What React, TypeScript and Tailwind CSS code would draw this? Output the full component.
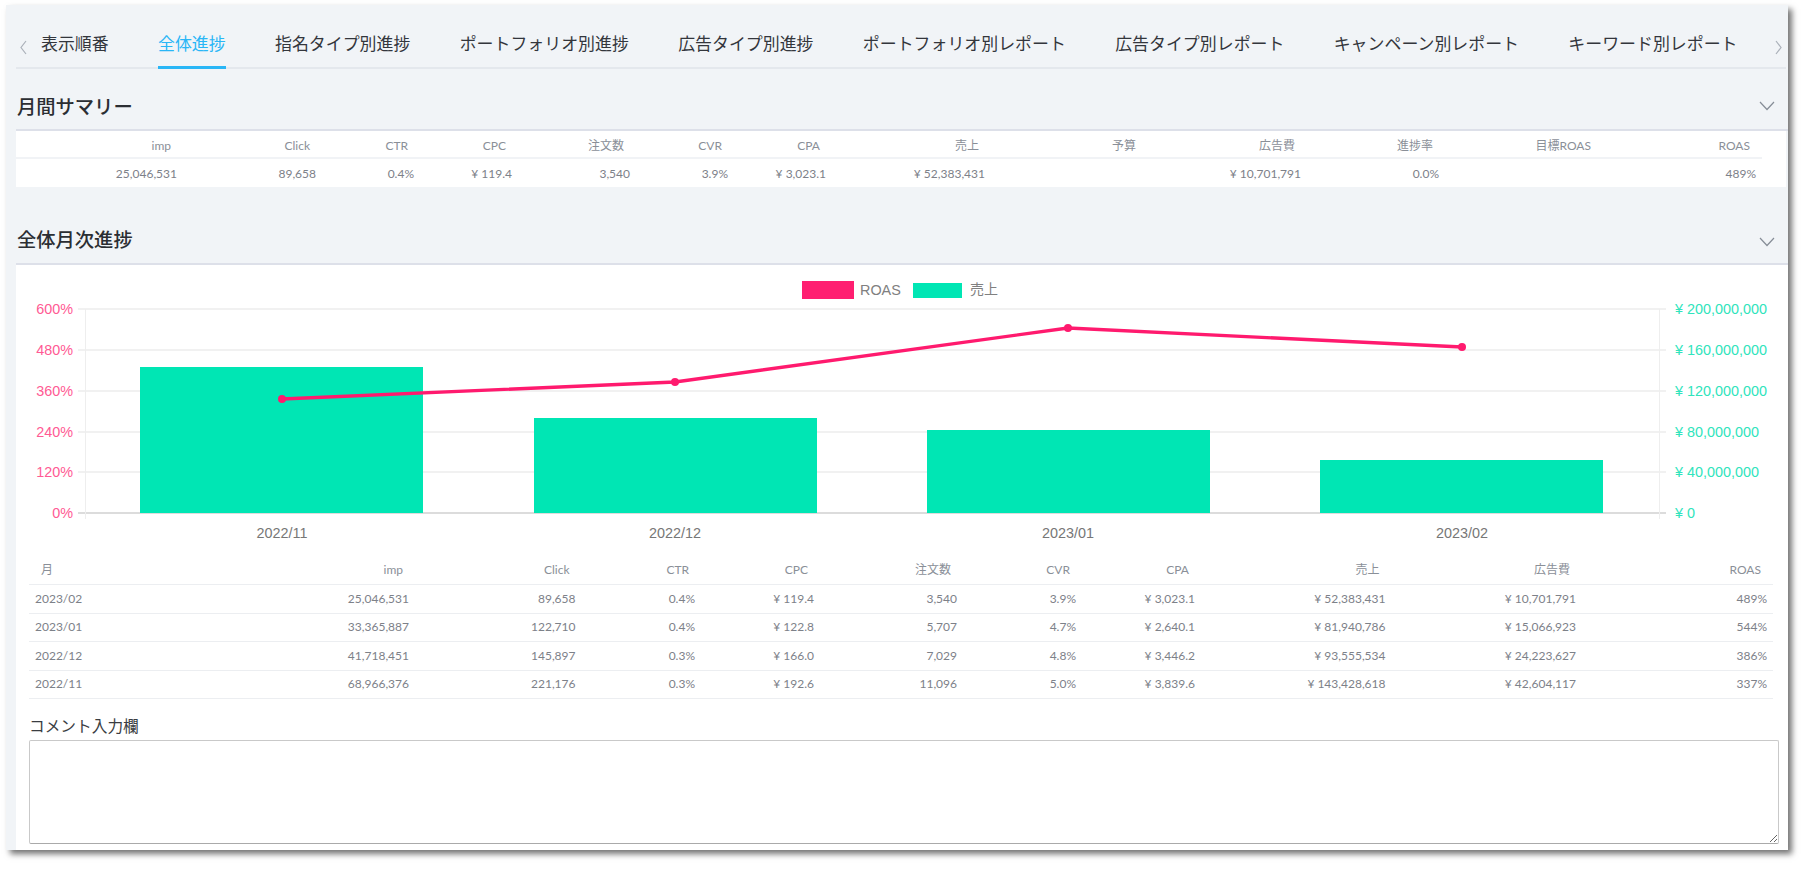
import React from "react";

const font = { fontFamily: '"Lato", "Noto Sans CJK JP", sans-serif' };
const cjk = { fontFamily: '"Noto Sans CJK JP", "Lato", sans-serif' };
const tabs = ["表示順番", "全体進捗", "指名タイプ別進捗", "ポートフォリオ別進捗", "広告タイプ別進捗", "ポートフォリオ別レポート", "広告タイプ別レポート", "キャンペーン別レポート", "キーワード別レポート"];
const summaryHead = ["imp", "Click", "CTR", "CPC", "注文数", "CVR", "CPA", "売上", "予算", "広告費", "進捗率", "目標ROAS", "ROAS"];
const summaryRow = ["25,046,531", "89,658", "0.4%", "¥ 119.4", "3,540", "3.9%", "¥ 3,023.1", "¥ 52,383,431", "", "¥ 10,701,791", "0.0%", "", "489%"];
const monthHead = ["imp", "Click", "CTR", "CPC", "注文数", "CVR", "CPA", "売上", "広告費", "ROAS"];
const monthRows = [
  ["2023/02", "25,046,531", "89,658", "0.4%", "¥ 119.4", "3,540", "3.9%", "¥ 3,023.1", "¥ 52,383,431", "¥ 10,701,791", "489%"],
  ["2023/01", "33,365,887", "122,710", "0.4%", "¥ 122.8", "5,707", "4.7%", "¥ 2,640.1", "¥ 81,940,786", "¥ 15,066,923", "544%"],
  ["2022/12", "41,718,451", "145,897", "0.3%", "¥ 166.0", "7,029", "4.8%", "¥ 3,446.2", "¥ 93,555,534", "¥ 24,223,627", "386%"],
  ["2022/11", "68,966,376", "221,176", "0.3%", "¥ 192.6", "11,096", "5.0%", "¥ 3,839.6", "¥ 143,428,618", "¥ 42,604,117", "337%"],
];

function Chevron({ d, color = "#aab0b9" }: { d: string; color?: string }) {
  return (
    <svg width="16" height="16" viewBox="0 0 16 16" fill="none" stroke={color} strokeWidth="1.2">
      <path d={d} />
    </svg>
  );
}

function SectionTitle({ title, className, chevronClass }: { title: string; className: string; chevronClass: string }) {
  return (
    <div className={`flex items-end justify-between border-b-2 border-[#dde0e9] pl-[1px] pr-[13px] ${className}`}>
      <span className="text-[19.3px] font-medium leading-[28px] text-[#2b2e33]" style={cjk}>{title}</span>
      <span className={chevronClass}><Chevron d="M1 4 L8 11.5 L15 4" color="#868d97" /></span>
    </div>
  );
}

function Chart() {
  const gridY = [309, 350, 391, 432, 472];
  const left = ["600%", "480%", "360%", "240%", "120%", "0%"];
  const right = ["¥ 200,000,000", "¥ 160,000,000", "¥ 120,000,000", "¥ 80,000,000", "¥ 40,000,000", "¥ 0"];
  const ys = [309, 350, 391, 432, 472, 513];
  const bars = [[140, 367], [534, 418], [927, 430], [1320, 460]];
  const pts = [[282, 399], [675, 382], [1068, 328], [1462, 347]];
  const labels = [[282, "2022/11"], [675, "2022/12"], [1068, "2023/01"], [1462, "2023/02"]] as const;
  const f = "Liberation Sans, Arial, sans-serif";
  return (
    <svg width="1772" height="290" viewBox="16 265 1772 290" className="block">
      {gridY.map((y) => <line key={y} x1="78" x2="1666" y1={y} y2={y} stroke="#ececec" strokeWidth="1.4" />)}
      <line x1="78" x2="1666" y1="513" y2="513" stroke="#d0d0d0" strokeWidth="1.4" />
      <line x1="85.5" x2="85.5" y1="309" y2="519" stroke="#eeeeee" />
      <line x1="1659.5" x2="1659.5" y1="309" y2="519" stroke="#eeeeee" />
      {bars.map(([x, y]) => <rect key={x} x={x} y={y} width="283" height={513 - y} fill="#00e6b4" />)}
      <polyline points={pts.map((p) => p.join(",")).join(" ")} fill="none" stroke="#ff1a6e" strokeWidth="3.4" />
      {pts.map(([x, y]) => <circle key={x} cx={x} cy={y} r="4" fill="#ff1a6e" />)}
      {left.map((t, i) => <text key={t} x="73" y={ys[i] + 5} textAnchor="end" fontSize="14.4" fontFamily={f} fill="#ff5a94">{t}</text>)}
      {right.map((t, i) => <text key={t} x="1675" y={ys[i] + 5} fontSize="14.4" fontFamily={f} fill="#30e4bc">{t}</text>)}
      {labels.map(([x, t]) => <text key={t} x={x} y="538" textAnchor="middle" fontSize="14.4" fontFamily={f} fill="#777777">{t}</text>)}
      <rect x="802" y="281" width="52" height="18" fill="#ff1f71" />
      <text x="860" y="295" fontSize="14.4" fontFamily={f} fill="#808080">ROAS</text>
      <rect x="913" y="283" width="49" height="15" fill="#00e6b4" />
      <text x="970" y="294" fontSize="14" fontFamily='"Noto Sans CJK JP", sans-serif' fill="#808080">売上</text>
    </svg>
  );
}

export default function App() {
  return (
    <div className="min-h-screen bg-white pl-[6px] pt-[5px]" style={font}>
      <div className="flex h-[845px] w-[1782px] flex-col bg-[#f1f4f7] pl-[10px] shadow-[4px_4px_6px_rgba(0,0,0,0.55)]">
        <div className="mr-[2px] flex h-[64px] border-b-2 border-[#e4e8ed]">
          <div className="flex h-[62px] w-[25px] shrink-0 items-end pb-[12px]">
            <Chevron d="M10 2 L5 8.5 L10 15" />
          </div>
          <div className="flex h-[64px] shrink-0 gap-[49.3px]" style={cjk}>
            {tabs.map((t, i) => (
              <div key={t} className={`flex h-[64px] shrink-0 items-end whitespace-nowrap border-b-[3px] pb-[11px] text-[16.93px] leading-[24px] ${i === 1 ? "border-[#29b6f6] text-[#29b6f6]" : "border-transparent text-[#33363c]"}`}>
                {t}
              </div>
            ))}
          </div>
          <div className="ml-[32px] flex h-[62px] shrink-0 items-end pb-[12px]">
            <Chevron d="M6 2 L11 8.5 L6 15" />
          </div>
        </div>

        <SectionTitle title="月間サマリー" className="h-[62px] pb-[9px]" chevronClass="mb-[6px]" />
        <div className="mr-[2px] h-[56px] bg-white">
          <div className="w-[1746px]">
            <div className="grid h-[28px] grid-cols-[167px_139px_98px_98px_118px_98px_98px_159px_157px_159px_138px_158px_159px] items-center border-b-2 border-[#f1f3f6] pt-[3px] text-[12px] text-[#8a8f98]">
              {summaryHead.map((h) => <div key={h} className="pr-[12px] text-right">{h}</div>)}
            </div>
            <div className="grid h-[26px] grid-cols-[167px_139px_98px_98px_118px_98px_98px_159px_157px_159px_138px_158px_159px] items-center pt-[3px] text-[12px] text-[#7d8189]">
              {summaryRow.map((v, i) => <div key={i} className="pr-[6px] text-right">{v}</div>)}
            </div>
          </div>
        </div>

        <SectionTitle title="全体月次進捗" className="h-[78px] pb-[10px]" chevronClass="mb-[3px]" />
        <div className="flex-1 bg-white">
          <Chart />
          <div className="ml-[13px] w-[1744px]">
            <div className="grid h-[30px] grid-cols-[386px_166.5px_119.5px_119px_143px_119px_119px_190.5px_190.5px_191px] items-center border-b border-[#eceef1] text-[12px] text-[#8a8f98]">
              <div className="relative pr-[12px] text-right">
                <span className="absolute left-[12px] top-0">月</span>imp
              </div>
              {monthHead.slice(1).map((h) => <div key={h} className="pr-[12px] text-right">{h}</div>)}
            </div>
            {monthRows.map((r) => (
              <div key={r[0]} className="grid h-[28.5px] grid-cols-[386px_166.5px_119.5px_119px_143px_119px_119px_190.5px_190.5px_191px] items-center border-b border-[#eceef1] text-[12px] text-[#7d8189]">
                <div className="relative pr-[6px] text-right">
                  <span className="absolute left-[6px] top-0">{r[0]}</span>{r[1]}
                </div>
                {r.slice(2).map((v, i) => <div key={i} className="pr-[6px] text-right">{v}</div>)}
              </div>
            ))}
          </div>
          <div className="ml-[13px] mt-[16px] w-[1750px]">
            <div className="mb-[3px] text-[15.7px] leading-[22px] text-[#3a3d42]" style={cjk}>コメント入力欄</div>
            <textarea className="block h-[104px] w-full resize-y rounded-[2px] border border-[#c9c9c9] border-b-[#aaaaaa] bg-white" />
          </div>
        </div>
      </div>
    </div>
  );
}
